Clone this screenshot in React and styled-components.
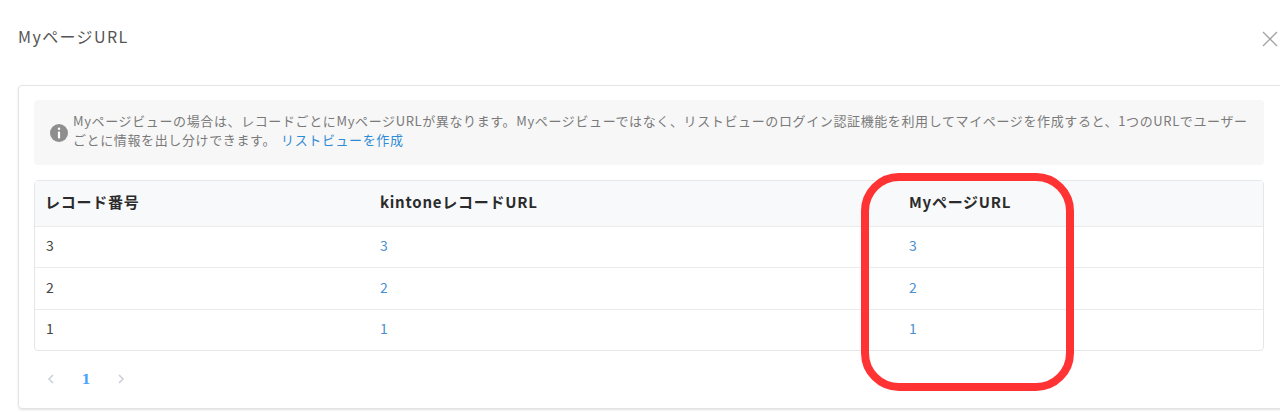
import styled, { createGlobalStyle } from 'styled-components';

const GlobalStyle = createGlobalStyle`
  html, body {
    margin: 0;
    padding: 0;
    background: #fff;
    overflow: hidden;
  }
  body {
    font-family: "Noto Sans CJK JP", "Noto Sans", sans-serif;
    color: #333;
  }
`;

const rows = [3, 2, 1];

export default function App() {
  return (
    <>
      <GlobalStyle />
      <Page>
        <Header>
          <Title>MyページURL</Title>
          <CloseButton aria-label="close">
            <svg width="16" height="16" viewBox="0 0 16 16" fill="none">
              <path d="M1 1l14 14M15 1L1 15" stroke="#a3a3a3" strokeWidth="1.3" />
            </svg>
          </CloseButton>
        </Header>
        <Panel>
          <Notice>
            <InfoIcon viewBox="0 0 18 18">
              <circle cx="9" cy="9" r="9" fill="#8e8e8e" />
              <rect x="7.8" y="3.6" width="2.4" height="2.4" rx="1.2" fill="#fff" />
              <rect x="7.9" y="7.4" width="2.2" height="7" rx="0.6" fill="#fff" />
            </InfoIcon>
            <NoticeText>
              Myページビューの場合は、レコードごとにMyページURLが異なります。Myページビューではなく、リストビューのログイン認証機能を利用してマイページを作成すると、1つのURLでユーザー
              <br />
              ごとに情報を出し分けできます。
              <NoticeLink href="#">リストビューを作成</NoticeLink>
            </NoticeText>
          </Notice>
          <Table>
            <HeadRow>
              <HeadCell>レコード番号</HeadCell>
              <HeadCell>kintoneレコードURL</HeadCell>
              <HeadCell>MyページURL</HeadCell>
            </HeadRow>
            {rows.map((n) => (
              <Row key={n}>
                <Cell>{n}</Cell>
                <Cell><CellLink href="#">{n}</CellLink></Cell>
                <Cell><CellLink href="#">{n}</CellLink></Cell>
              </Row>
            ))}
          </Table>
          <Pager>
            <PagerArrow viewBox="0 0 8 12">
              <path d="M6 2L2 6l4 4" />
            </PagerArrow>
            <PagerNumber>1</PagerNumber>
            <PagerArrow viewBox="0 0 8 12">
              <path d="M2 2l4 4-4 4" />
            </PagerArrow>
          </Pager>
        </Panel>
        <Highlight />
      </Page>
    </>
  );
}

const Page = styled.div`
  position: relative;
  width: 1280px;
  height: 412px;
  overflow: hidden;
  background: #fff;
`;

const Header = styled.header`
  height: 85px;
  display: flex;
  justify-content: space-between;
  align-items: flex-start;
  padding: 25px 2px 0 18px;
  box-sizing: border-box;
`;

const Title = styled.h1`
  margin: 0;
  font-size: 16px;
  font-weight: 400;
  line-height: 22px;
  color: #555;
  letter-spacing: 1.4px;
`;

const CloseButton = styled.button`
  border: 0;
  padding: 0;
  margin-top: 6px;
  background: none;
  display: block;
  line-height: 0;
`;

const Panel = styled.section`
  width: 1290px;
  height: 324px;
  margin-left: 18px;
  padding: 14px 0 0 15px;
  box-sizing: border-box;
  border: 1px solid #e4e4e4;
  border-radius: 4px;
  box-shadow: 0 1px 2px rgba(0, 0, 0, 0.12);
`;

const Notice = styled.div`
  width: 1230px;
  height: 65px;
  box-sizing: border-box;
  padding: 0 14px 6px 16px;
  display: flex;
  align-items: center;
  gap: 5px;
  background: #f7f7f7;
  border-radius: 4px;
`;

const InfoIcon = styled.svg`
  width: 18px;
  height: 18px;
  flex: none;
  margin-top: 6px;
`;

const NoticeText = styled.p`
  margin: 0;
  font-size: 13px;
  line-height: 19px;
  color: #7a7a7a;
  white-space: nowrap;
  letter-spacing: 0.62px;
`;

const NoticeLink = styled.a`
  margin-left: 5px;
  color: #2f8bd6;
  text-decoration: none;
`;

const Table = styled.div`
  width: 1230px;
  margin-top: 15px;
  box-sizing: border-box;
  border: 1px solid #e6e6e6;
  border-radius: 4px;
  font-size: 14px;
`;

const Row = styled.div`
  display: grid;
  grid-template-columns: 333px 529px 1fr;
  height: 41.6px;
  align-items: center;
  border-top: 1px solid #ebebeb;
  box-sizing: border-box;
  padding-bottom: 3px;
  color: #444;
`;

const HeadRow = styled(Row)`
  height: 44.5px;
  border-top: 0;
  background: #f8f9fb;
  color: #2b2b2b;
`;

const Cell = styled.div`
  padding-left: 11px;
`;

const HeadCell = styled(Cell)`
  padding-left: 12px;
  font-size: 15px;
  font-weight: 700;
  letter-spacing: 0.75px;

  &:first-child {
    padding-left: 10px;
  }
`;

const CellLink = styled.a`
  margin-left: 1px;
  color: #4a8fd3;
  text-decoration: none;
`;

const Pager = styled.nav`
  display: flex;
  align-items: center;
  height: 56px;
  padding-left: 13px;
`;

const PagerArrow = styled.svg`
  width: 8px;
  height: 12px;
  fill: none;
  stroke: #ccd0d8;
  stroke-width: 1.6;
`;

const PagerNumber = styled.span`
  width: 62px;
  text-align: center;
  font-family: "DejaVu Serif", serif;
  font-size: 13px;
  font-weight: 700;
  color: #4aa3ff;
`;

const Highlight = styled.div`
  position: absolute;
  left: 861px;
  top: 173px;
  width: 213px;
  height: 218px;
  box-sizing: border-box;
  border: 8px solid #ff3333;
  border-radius: 38px;
  pointer-events: none;
`;
